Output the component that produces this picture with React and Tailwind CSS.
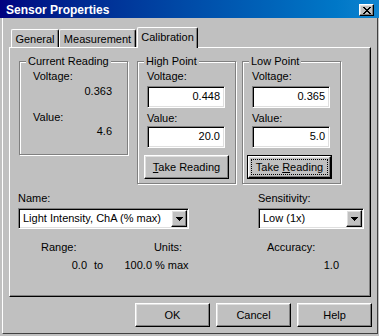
import React from 'react';

const raised =
  'bg-[#c0c0c0] border border-t-white border-l-white border-r-black border-b-black shadow-[inset_-1px_-1px_0_#808080,inset_1px_1px_0_#dfdfdf]';
const sunken =
  'bg-white border border-t-[#808080] border-l-[#808080] border-r-white border-b-white shadow-[inset_1px_1px_0_#000,inset_-1px_-1px_0_#dfdfdf]';

function Group({ label, className, children }) {
  return (
    <div className={`relative border border-[#808080] shadow-[inset_1px_1px_0_#fff,1px_1px_0_#fff] ${className}`}>
      <span className="absolute -top-[7px] left-[6px] bg-[#c0c0c0] px-[2px] leading-[13px]">{label}</span>
      {children}
    </div>
  );
}

function Field({ value, className }) {
  return (
    <div className={`${sunken} w-[78px] h-[22px] flex items-center justify-end pr-[4px] pb-[2px] ${className}`}>
      {value}
    </div>
  );
}

function Combo({ value, className }) {
  return (
    <div className={`${sunken} h-[21px] flex items-center p-[1px] ${className}`}>
      <span className="flex-1 pl-[3px] pb-[1px]">{value}</span>
      <div className={`${raised} w-[16px] h-full flex items-center justify-center`}>
        <svg width="7" height="4" viewBox="0 0 7 4" shapeRendering="crispEdges">
          <path d="M0 0h7v1H0zM1 1h5v1H1zM2 2h3v1H2zM3 3h1v1H3z" fill="#000" />
        </svg>
      </div>
    </div>
  );
}

function Tab({ label, selected, className = '' }) {
  return (
    <div
      className={`flex items-center justify-center border-t border-l border-r border-t-white border-l-white border-r-black rounded-t-[2px] shadow-[inset_-1px_0_0_#808080] bg-[#c0c0c0] ${
        selected ? 'relative z-10 h-[21px] -mb-[1px] pb-[1px]' : 'h-[18px] pt-[2px]'
      } ${className}`}
    >
      {label}
    </div>
  );
}

export default function App() {
  return (
    <div className="w-[379px] h-[336px] bg-[#c0c0c0] flex flex-col overflow-hidden text-black text-[11px] leading-[13px] font-['Liberation_Sans',Arial,sans-serif]">
      {/* Title bar */}
      <div className="h-[18px] shrink-0 flex items-start justify-between pl-[6px] pr-[5px] bg-linear-to-r from-[#000080] to-[#1084d0]">
        <span className="font-bold text-white text-[12px] leading-[18px] pt-[1px]">Sensor Properties</span>
        <div className={`${raised} mt-[4px] w-[15px] h-[12px] flex items-center justify-center`}>
          <svg width="8" height="7" viewBox="0 0 8 7" shapeRendering="crispEdges">
            <path
              d="M0 0h2v1H0zM6 0h2v1H6zM1 1h2v1H1zM5 1h2v1H5zM2 2h4v1H2zM3 3h2v1H3zM2 4h4v1H2zM1 5h2v1H1zM5 5h2v1H5zM0 6h2v1H0zM6 6h2v1H6z"
              fill="#000"
            />
          </svg>
        </div>
      </div>

      <div className="flex-1 flex flex-col ml-[2px] mr-[1px] mb-[2px] border-l border-l-white border-r border-r-[#404040] border-b border-b-[#404040]">
        <div className="ml-[6px] mt-[9px]">
          {/* Tabs */}
          <div className="h-[20px] flex items-end pl-[2px]">
            <Tab label="General" className="w-[48px]" />
            <Tab label="Measurement" className="w-[77px]" />
            <Tab label="Calibration" selected className="w-[61px] ml-[1px]" />
          </div>

          {/* Panel */}
          <div className="w-[362px] h-[250px] flex flex-col border border-t-white border-l-white border-r-black border-b-black shadow-[inset_-1px_-1px_0_#808080]">
            <div className="mt-[13px] ml-[9px] flex items-start">
              <Group label="Current Reading" className="w-[109px] h-[94px]">
                <div className="mt-[8px] ml-[13px]">Voltage:</div>
                <div className="mt-[2px] mr-[15px] text-right">0.363</div>
                <div className="mt-[13px] ml-[13px]">Value:</div>
                <div className="mt-[1px] mr-[15px] text-right">4.6</div>
              </Group>

              <Group label="High Point" className="ml-[9px] w-[99px] h-[123px]">
                <div className="mt-[8px] ml-[9px]">Voltage:</div>
                <Field className="mt-[3px] ml-[9px]" value="0.448" />
                <div className="mt-[4px] ml-[9px]">Value:</div>
                <Field className="mt-[1px] ml-[9px]" value="20.0" />
                <div className={`${raised} mt-[7px] ml-[6px] w-[85px] h-[24px] flex items-center justify-center`}>
                  <span>
                    <span className="underline">T</span>ake Reading
                  </span>
                </div>
              </Group>

              <Group label="Low Point" className="ml-[6px] w-[99px] h-[123px]">
                <div className="mt-[8px] ml-[9px]">Voltage:</div>
                <Field className="mt-[3px] ml-[9px]" value="0.365" />
                <div className="mt-[4px] ml-[9px]">Value:</div>
                <Field className="mt-[1px] ml-[9px]" value="5.0" />
                <div className="mt-[7px] ml-[4px] w-[85px] h-[24px] border border-black flex">
                  <div className={`${raised} flex-1 p-[2px] flex`}>
                    <div className="flex-1 border border-dotted border-black flex items-center justify-center">
                      <span>
                        Take <span className="underline">R</span>eading
                      </span>
                    </div>
                  </div>
                </div>
              </Group>
            </div>

            {/* Name / Sensitivity */}
            <div className="mt-[8px] ml-[8px] flex items-start">
              <div className="flex flex-col">
                <span>Name:</span>
                <Combo className="mt-[3px] w-[171px]" value="Light Intensity, ChA (% max)" />
              </div>
              <div className="ml-[69px] flex flex-col">
                <span>Sensitivity:</span>
                <Combo className="mt-[3px] w-[106px]" value="Low (1x)" />
              </div>
            </div>

            {/* Range / Units / Accuracy */}
            <div className="mt-[12px] flex pl-[31px]">
              <div className="w-[141px] flex justify-between">
                <span>Range:</span>
                <span>Units:</span>
              </div>
              <span className="ml-[85px]">Accuracy:</span>
            </div>
            <div className="mt-[5px] flex">
              <span className="w-[77px] text-right">0.0</span>
              <span className="ml-[7px] w-[20px]">to</span>
              <span className="w-[38px] text-right">100.0</span>
              <span className="ml-[3px] w-[60px]">% max</span>
              <span className="w-[124px] text-right">1.0</span>
            </div>
          </div>
        </div>

        {/* Dialog buttons */}
        <div className="mt-[6px] flex justify-end gap-[6px] pr-[5px]">
          {['OK', 'Cancel', 'Help'].map((b) => (
            <div key={b} className={`${raised} w-[75px] h-[24px] flex items-center justify-center`}>
              {b}
            </div>
          ))}
        </div>
      </div>
    </div>
  );
}
